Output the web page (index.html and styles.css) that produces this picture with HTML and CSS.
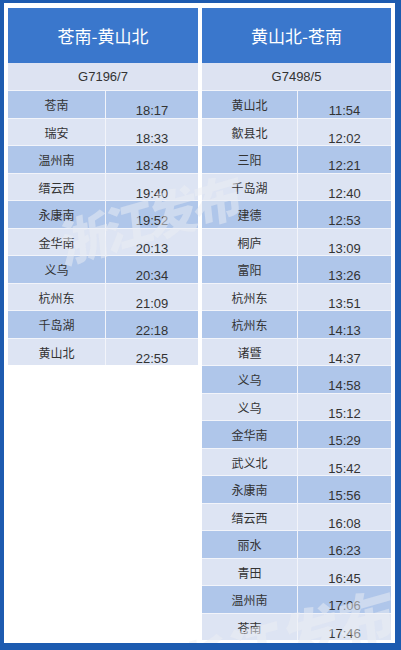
FILE: index.html
```html
<!DOCTYPE html>
<html lang="zh">
<head>
<meta charset="utf-8">
<title>苍南-黄山北 时刻表</title>
<link rel="stylesheet" href="styles.css">
</head>
<body>
<div class="frame">
  <div class="tables">
    <div class="table left">
      <div class="head">苍南-黄山北</div>
      <div class="train">G7196/7</div>
      <div class="row dark"><span class="st">苍南</span><span class="tm">18:17</span></div>
      <div class="row"><span class="st">瑞安</span><span class="tm">18:33</span></div>
      <div class="row dark"><span class="st">温州南</span><span class="tm">18:48</span></div>
      <div class="row"><span class="st">缙云西</span><span class="tm">19:40</span></div>
      <div class="row dark"><span class="st">永康南</span><span class="tm">19:52</span></div>
      <div class="row"><span class="st">金华南</span><span class="tm">20:13</span></div>
      <div class="row dark"><span class="st">义乌</span><span class="tm">20:34</span></div>
      <div class="row"><span class="st">杭州东</span><span class="tm">21:09</span></div>
      <div class="row dark"><span class="st">千岛湖</span><span class="tm">22:18</span></div>
      <div class="row"><span class="st">黄山北</span><span class="tm">22:55</span></div>
    </div>
    <div class="table right">
      <div class="head">黄山北-苍南</div>
      <div class="train">G7498/5</div>
      <div class="row dark"><span class="st">黄山北</span><span class="tm">11:54</span></div>
      <div class="row"><span class="st">歙县北</span><span class="tm">12:02</span></div>
      <div class="row dark"><span class="st">三阳</span><span class="tm">12:21</span></div>
      <div class="row"><span class="st">千岛湖</span><span class="tm">12:40</span></div>
      <div class="row dark"><span class="st">建德</span><span class="tm">12:53</span></div>
      <div class="row"><span class="st">桐庐</span><span class="tm">13:09</span></div>
      <div class="row dark"><span class="st">富阳</span><span class="tm">13:26</span></div>
      <div class="row"><span class="st">杭州东</span><span class="tm">13:51</span></div>
      <div class="row dark"><span class="st">杭州东</span><span class="tm">14:13</span></div>
      <div class="row"><span class="st">诸暨</span><span class="tm">14:37</span></div>
      <div class="row dark"><span class="st">义乌</span><span class="tm">14:58</span></div>
      <div class="row"><span class="st">义乌</span><span class="tm">15:12</span></div>
      <div class="row dark"><span class="st">金华南</span><span class="tm">15:29</span></div>
      <div class="row"><span class="st">武义北</span><span class="tm">15:42</span></div>
      <div class="row dark"><span class="st">永康南</span><span class="tm">15:56</span></div>
      <div class="row"><span class="st">缙云西</span><span class="tm">16:08</span></div>
      <div class="row dark"><span class="st">丽水</span><span class="tm">16:23</span></div>
      <div class="row"><span class="st">青田</span><span class="tm">16:45</span></div>
      <div class="row dark"><span class="st">温州南</span><span class="tm">17:06</span></div>
      <div class="row"><span class="st">苍南</span><span class="tm">17:46</span></div>
    </div>
  </div>
  <div class="wm wm1">浙江发布</div>
  <div class="wm wm2">浙江发布</div>
</div>
</body>
</html>
```
FILE: styles.css
```css
html, body {
  margin: 0;
  padding: 0;
}
body {
  width: 401px;
  height: 650px;
  overflow: hidden;
  background: #1d5bb0;
}
.frame {
  position: relative;
  box-sizing: border-box;
  width: 401px;
  height: 650px;
  border-style: solid;
  border-color: #1d5bb0;
  border-width: 3px 6px 7px 4px;
  background: #ffffff;
  padding: 5px 4px 0 4px;
  overflow: hidden;
}
.tables {
  display: grid;
  grid-template-columns: 190px 189px;
  column-gap: 4px;
  align-items: start;
}
.table {
  display: flex;
  flex-direction: column;
}
.head {
  height: 55px;
  background: #3a77cc;
  color: #ffffff;
  font-family: "Noto Sans CJK SC", sans-serif;
  font-size: 17px;
  display: flex;
  align-items: center;
  justify-content: center;
}
.train {
  height: 27px;
  background: #dde3f2;
  color: #333333;
  font-family: "Liberation Sans", Arial, sans-serif;
  font-size: 13px;
  display: flex;
  align-items: center;
  justify-content: center;
}
.row {
  box-sizing: border-box;
  height: 27.5px;
  border-top: 1px solid #f2f4fa;
  display: grid;
  grid-template-columns: 97px 1fr;
  column-gap: 1px;
  background: #dde4f3;
}
.right .row {
  grid-template-columns: 95px 1fr;
}
.row.dark {
  background: #afc6ea;
}
.row .st, .row .tm {
  display: block;
  text-align: center;
  color: #333333;
}
.row .st {
  font-family: "Noto Sans CJK SC", sans-serif;
  font-size: 12px;
  line-height: 12px;
  padding-top: 8px;
  box-shadow: 1px 0 0 #f2f4fa;
}
.row .tm {
  font-family: "Liberation Sans", Arial, sans-serif;
  font-size: 13px;
  line-height: 13px;
  padding-top: 13px;
}
.wm {
  position: absolute;
  font-family: "Noto Sans CJK SC", sans-serif;
  font-weight: 900;
  line-height: 1;
  color: rgba(236, 238, 243, 0.5);
  transform: rotate(-16deg) skewX(-10deg);
  transform-origin: left top;
  white-space: nowrap;
  pointer-events: none;
}
.wm1 {
  left: 54px;
  top: 214px;
  font-size: 50px;
  letter-spacing: -4px;
}
.wm2 {
  left: 164px;
  top: 640px;
  font-size: 58px;
}
```
